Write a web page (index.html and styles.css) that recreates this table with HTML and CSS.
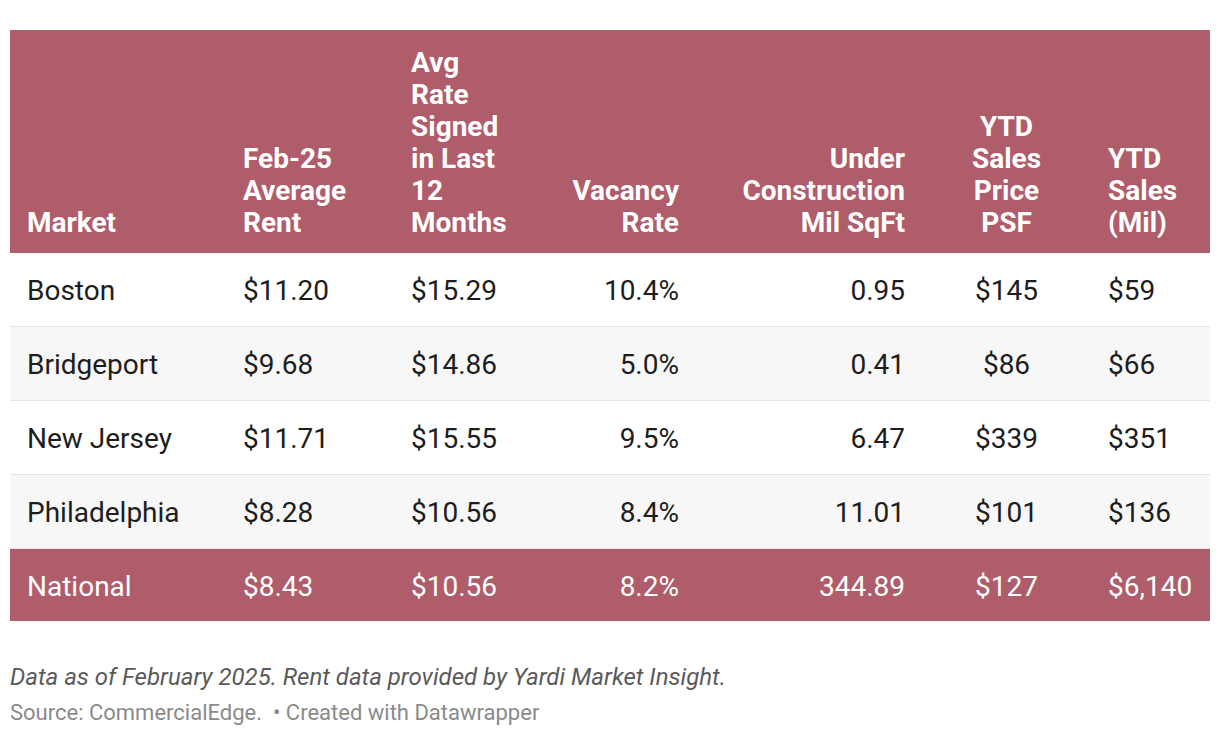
FILE: index.html
```html
<!DOCTYPE html>
<html>
<head>
<meta charset="utf-8">
<link rel="stylesheet" href="styles.css">
</head>
<body>
<div class="chart">
  <table class="tbl">
    <colgroup>
      <col class="c1"><col class="c2"><col class="c3"><col class="c4"><col class="c5"><col class="c6"><col class="c7">
    </colgroup>
    <thead>
      <tr>
        <th class="l">Market</th>
        <th class="l">Feb-25<br>Average<br>Rent</th>
        <th class="l">Avg<br>Rate<br>Signed<br>in Last<br>12<br>Months</th>
        <th class="r">Vacancy<br>Rate</th>
        <th class="r">Under<br>Construction<br>Mil SqFt</th>
        <th class="c">YTD<br>Sales<br>Price<br>PSF</th>
        <th class="l">YTD<br>Sales<br>(Mil)</th>
      </tr>
    </thead>
    <tbody>
      <tr class="first">
        <td class="l">Boston</td><td class="l">$11.20</td><td class="l">$15.29</td><td class="r">10.4%</td><td class="r">0.95</td><td class="c">$145</td><td class="l">$59</td>
      </tr>
      <tr class="alt">
        <td class="l">Bridgeport</td><td class="l">$9.68</td><td class="l">$14.86</td><td class="r">5.0%</td><td class="r">0.41</td><td class="c">$86</td><td class="l">$66</td>
      </tr>
      <tr>
        <td class="l">New Jersey</td><td class="l">$11.71</td><td class="l">$15.55</td><td class="r">9.5%</td><td class="r">6.47</td><td class="c">$339</td><td class="l">$351</td>
      </tr>
      <tr class="alt">
        <td class="l">Philadelphia</td><td class="l">$8.28</td><td class="l">$10.56</td><td class="r">8.4%</td><td class="r">11.01</td><td class="c">$101</td><td class="l">$136</td>
      </tr>
      <tr class="total">
        <td class="l">National</td><td class="l">$8.43</td><td class="l">$10.56</td><td class="r">8.2%</td><td class="r">344.89</td><td class="c">$127</td><td class="l">$6,140</td>
      </tr>
    </tbody>
  </table>
  <div class="notes">Data as of February 2025. Rent data provided by Yardi Market Insight.</div>
  <div class="source">Source: CommercialEdge.&nbsp; • Created with Datawrapper</div>
</div>
</body>
</html>
```

FILE: styles.css
```css
html, body {
  margin: 0;
  padding: 0;
  background: #ffffff;
}
body {
  font-family: Roboto, "Liberation Sans", sans-serif;
}
.chart {
  padding: 30px 10px 0 10px;
}
.tbl {
  width: 1200px;
  border-collapse: collapse;
  table-layout: fixed;
}
.c1 { width: 216px; }
.c2 { width: 168px; }
.c3 { width: 158px; }
.c4 { width: 144px; }
.c5 { width: 226px; }
.c6 { width: 169px; }
.c7 { width: 119px; }
.tbl th {
  background: #af5d6a;
  color: #ffffff;
  font-weight: 700;
  font-size: 28px;
  line-height: 32px;
  vertical-align: bottom;
  padding: 17px 17px 14px 17px;
}
.tbl td {
  font-size: 28px;
  line-height: 32px;
  color: #1d1d1d;
  height: 74px;
  padding: 4px 17px 0 17px;
  box-sizing: border-box;
  vertical-align: middle;
  border-bottom: 1px solid #e6e6e6;
}
.tbl tr.first td {
  height: 73px;
}
.tbl tr.alt td {
  background: #f7f7f7;
}
.tbl tr.total td {
  background: #af5d6a;
  color: #ffffff;
  height: 73px;
  border-bottom: none;
}
.l { text-align: left; }
.r { text-align: right; }
.c { text-align: center; }
.notes {
  margin-top: 41px;
  font-size: 24px;
  font-style: italic;
  color: #5a5a5a;
  line-height: 30px;
}
.source {
  margin-top: 8px;
  font-size: 22px;
  color: #8a8a8a;
  line-height: 26px;
}
```
